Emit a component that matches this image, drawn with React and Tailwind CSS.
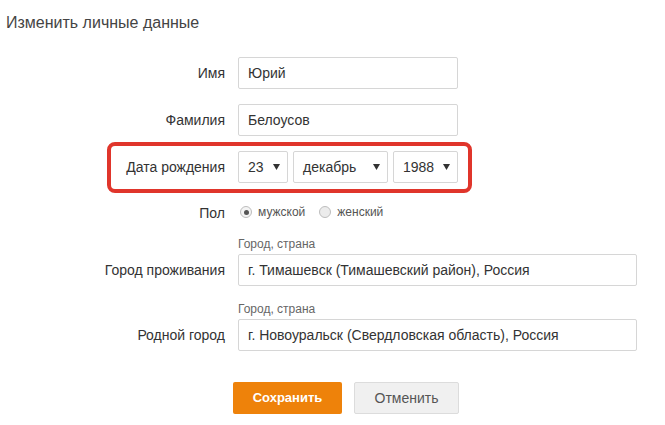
import React from 'react';

function Row({ label, children, labelClass = '' }) {
  return (
    <div className="flex items-center">
      <div className={`w-[225px] text-right text-[14px] text-[#333] ${labelClass}`}>{label}</div>
      <div className="ml-[13px]">{children}</div>
    </div>
  );
}

function Arrow() {
  return (
    <svg width="7" height="6" viewBox="0 0 7 6" className="shrink-0">
      <path d="M0 0 L7 0 L3.5 6 Z" fill="#333" />
    </svg>
  );
}

function Select({ value, width }) {
  return (
    <div
      className={`h-[32px] ${width} border border-[#d6d6d6] rounded-[2px] bg-white flex items-center justify-between pl-[9px] pr-[7px] text-[14px] text-[#333]`}
    >
      <span>{value}</span>
      <Arrow />
    </div>
  );
}

function Radio({ checked, label }) {
  return (
    <label className="flex items-center text-[12px] text-[#555]">
      <span
        className={`w-[12px] h-[12px] rounded-full border border-[#bdbdbd] flex items-center justify-center ${
          checked ? 'bg-[#f4f4f4]' : 'bg-[#ececec]'
        }`}
      >
        {checked && <span className="w-[5px] h-[5px] rounded-full bg-[#555]" />}
      </span>
      <span className="ml-[6px]">{label}</span>
    </label>
  );
}

function TextInput({ value, width }) {
  return (
    <div
      className={`h-[32px] ${width} border border-[#d6d6d6] rounded-[2px] bg-white flex items-center px-[9px] text-[14px] text-[#333]`}
    >
      {value}
    </div>
  );
}

export default function App() {
  return (
    <div className="w-[665px] h-[425px] bg-white font-['Liberation_Sans',Arial,sans-serif] overflow-hidden">
      <h1 className="pl-[6px] pt-[13px] text-[16px] leading-[19px] text-[#444]">Изменить личные данные</h1>

      <div className="mt-[25px] flex flex-col">
        <Row label="Имя">
          <TextInput value="Юрий" width="w-[220px]" />
        </Row>

        <div className="mt-[15px]">
          <Row label="Фамилия">
            <TextInput value="Белоусов" width="w-[220px]" />
          </Row>
        </div>

        {/* date row with the red highlight frame */}
        <div className="mt-[15px] relative">
          <Row label="Дата рождения">
            <div className="flex gap-[5px]">
              <Select value="23" width="w-[50px]" />
              <Select value="декабрь" width="w-[95px]" />
              <Select value="1988" width="w-[65px]" />
            </div>
          </Row>
          <div className="absolute left-[107px] top-[-9px] w-[365px] h-[51px] border-4 border-[#e0352b] rounded-[8px] pointer-events-none" />
        </div>

        <div className="mt-[19px] h-[20px] flex items-center">
          <div className="w-[225px] text-right text-[14px] text-[#333] pt-[3px]">Пол</div>
          <div className="ml-[15px] flex items-center gap-[14px]">
            <Radio checked label="мужской" />
            <Radio label="женский" />
          </div>
        </div>

        <div className="mt-[15px] ml-[238px] text-[12px] leading-[14px] text-[#666]">Город, страна</div>
        <div className="mt-[3px]">
          <Row label="Город проживания">
            <TextInput value="г. Тимашевск (Тимашевский район), Россия" width="w-[399px]" />
          </Row>
        </div>

        <div className="mt-[16px] ml-[238px] text-[12px] leading-[14px] text-[#666]">Город, страна</div>
        <div className="mt-[3px]">
          <Row label="Родной город">
            <TextInput value="г. Новоуральск (Свердловская область), Россия" width="w-[399px]" />
          </Row>
        </div>

        <div className="mt-[31px] ml-[233px] flex gap-[12px]">
          <button className="h-[32px] w-[109px] rounded-[2px] bg-[#ee820a] text-white text-[13px] font-bold">
            Сохранить
          </button>
          <button className="h-[32px] w-[105px] rounded-[2px] bg-[#f0f0f0] border border-[#dcdcdc] text-[#555] text-[14px]">
            Отменить
          </button>
        </div>
      </div>
    </div>
  );
}
